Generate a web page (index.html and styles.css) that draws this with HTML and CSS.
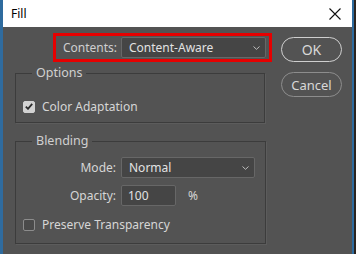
FILE: index.html
```html
<!DOCTYPE html>
<html lang="en">
<head>
  <meta charset="UTF-8">
  <title>Fill</title>
  <link rel="stylesheet" href="styles.css">
</head>
<body>
  <div class="window">
    <div class="titlebar">
      <span class="title">Fill</span>
      <svg class="close" width="12" height="12" viewBox="0 0 12 12"><path d="M0.5 0.5L11.5 11.5M11.5 0.5L0.5 11.5" stroke="#111" stroke-width="1.1"/></svg>
    </div>

    <div class="content">
      <div class="main">
        <!-- contents picker, highlighted -->
        <div class="contents">
          <span class="label">Contents:</span>
          <div class="select wide">
            <span>Content-Aware</span>
            <svg class="chev" width="7" height="4" viewBox="0 0 7 4"><path d="M0.5 0.5L3.5 3.3L6.5 0.5" fill="none" stroke="#bdbdbd" stroke-width="1"/></svg>
          </div>
        </div>

        <fieldset class="group options">
          <legend>Options</legend>
          <label class="check"><span class="box on"><svg width="8" height="7" viewBox="0 0 8 7"><path d="M0.8 3.6L3 5.8L7.2 0.9" fill="none" stroke="#2b2b2b" stroke-width="1.8"/></svg></span>Color Adaptation</label>
        </fieldset>

        <fieldset class="group blending">
          <legend>Blending</legend>
          <div class="row">
            <span class="rlabel">Mode:</span>
            <div class="select mode">
              <span>Normal</span>
              <svg class="chev" width="7" height="4" viewBox="0 0 7 4"><path d="M0.5 0.5L3.5 3.3L6.5 0.5" fill="none" stroke="#bdbdbd" stroke-width="1"/></svg>
            </div>
          </div>
          <div class="row">
            <span class="rlabel">Opacity:</span>
            <div class="input">100</div>
            <span class="unit">%</span>
          </div>
          <label class="check"><span class="box"></span>Preserve Transparency</label>
        </fieldset>
      </div>

      <div class="actions">
        <button class="btn primary">OK</button>
        <button class="btn">Cancel</button>
      </div>
    </div>
  </div>
</body>
</html>
```

FILE: styles.css
```css
:root {
  --bg: #535353;
  --field: #454545;
  --text: #d6d6d6;
  --line: #3c3c3c;
}
* {box-sizing: border-box;font-family: "Noto Sans", sans-serif;}
body{margin:0;background:#2b2420;}
.window{height:254px;width:354px;margin-right:2px;display:flex;flex-direction:column;background:var(--bg);border-left:3px solid #2f6b9e;border-right:2px solid #2f6b9e;}
.titlebar{height:27px;flex:none;background:#fff;display:flex;align-items:center;justify-content:space-between;padding:0 8px 0 8px;}
.title{font-size:12px;color:#000;}
.close{margin-right:3px;}
.content{display:flex;padding-left:12px;color:var(--text);font-size:12px;}
.main{width:257px;}

.contents{display:flex;align-items:center;margin:6px 0 0 38px;width:219px;height:29px;border:3px solid #e60000;padding:0 3px 0 7px;}
.label{flex:1;color:#cfcfcf;}
.select{display:flex;align-items:center;justify-content:space-between;height:21px;background:var(--field);border:1px solid #676767;border-radius:2px;padding:0 5px 0 7px;color:#e2e2e2;}
.select.wide{width:145px;}
.select.mode{width:134px;}

.group{border:1px solid var(--line);padding:0;margin:3px 0 0;box-shadow:1px 1px 0 #5c5c5c;}
.group legend{margin-left:16px;padding:0 4px;font-size:12.5px;line-height:16px;color:#d0d0d0;}
.options{width:250px;height:58px;}
.options .check{margin:17px 0 0 7px;}
.blending{width:251px;height:111px;margin-top:10px;}

.row{display:flex;align-items:center;height:21px;margin-top:7px;}
.blending .row:first-of-type{margin-top:8px;}
.rlabel{width:105px;text-align:right;padding-right:5px;}
.input{width:55px;height:21px;background:var(--field);border:1px solid #676767;border-radius:2px;padding:0 6px;line-height:19px;color:#e2e2e2;}
.unit{margin-left:12px;}

.check{display:flex;align-items:center;gap:7px;margin:10px 0 0 7px;}
.box{width:12px;height:12px;border:1.5px solid #8c8c8c;border-radius:2px;background:#4a4a4a;display:flex;align-items:center;justify-content:center;}
.box.on{background:#d2d2d2;border-color:#d2d2d2;}

.actions{display:flex;flex-direction:column;gap:10px;margin:10px 0 0 9px;}
.btn{width:61px;height:25px;border-radius:13px;border:1.5px solid #8d8d8d;background:transparent;color:#d8d8d8;font-size:13px;padding:0;}
.btn.primary{border-color:#cfcfcf;font-size:14px;}
```
